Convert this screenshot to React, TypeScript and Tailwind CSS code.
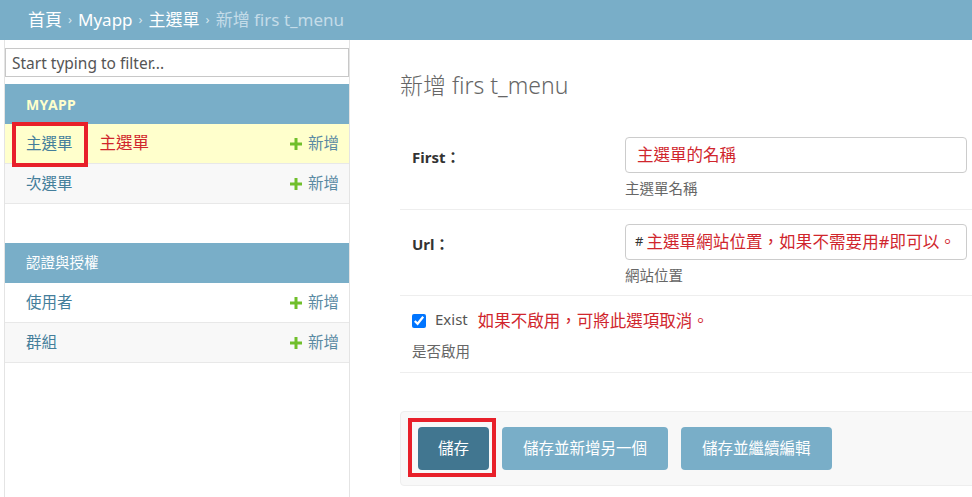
import React from "react";

const Plus = () => (
  <svg width="12" height="12" viewBox="0 0 12 12" className="mr-[6px]">
    <rect x="4.5" y="0" width="3" height="12" fill="#70bf2b" />
    <rect x="0" y="4.5" width="12" height="3" fill="#70bf2b" />
  </svg>
);

const SideRow = ({ name, bg, extra }: { name: string; bg: string; extra?: string }) => (
  <div className={`h-10 flex items-center pl-[21px] pr-[10px] border-b border-[#e8e8e8] ${bg}`}>
    <span className="text-[15.5px] text-[#447e9b]">{name}</span>
    {extra && <span className="ml-[27px] text-[16.5px] text-[#d0262d]">{extra}</span>}
    <span className="ml-auto flex items-center text-[15.5px] text-[#5a8aa3]">
      <Plus />
      新增
    </span>
  </div>
);

export default function App() {
  return (
    <div className="w-[972px] h-[497px] overflow-hidden bg-white font-['Noto_Sans','Noto_Sans_CJK_TC',sans-serif]">
      {/* breadcrumbs */}
      <header className="h-10 bg-[#79aec8] flex items-center pl-[28px] text-[17px] text-white">
        <span>首頁</span>
        <span className="mx-[6px] text-[13px] text-[#d6e7ef]">›</span>
        <span>Myapp</span>
        <span className="mx-[6px] text-[13px] text-[#d6e7ef]">›</span>
        <span>主選單</span>
        <span className="mx-[6px] text-[13px] text-[#d6e7ef]">›</span>
        <span className="text-[#c4dce8]">新增 firs t_menu</span>
      </header>

      <div className="flex h-[457px]">
        {/* sidebar */}
        <nav className="relative ml-[4px] w-[346px] flex-none border-x border-[#e4e4e4]">
          <div className="pt-[8px]">
            <input
              placeholder="Start typing to filter..."
              className="block h-[29px] w-full border border-[#c8c8c8] px-[6px] text-[15.5px] text-[#333] placeholder:text-[#555] outline-none"
            />
          </div>
          <div className="mt-[7px]">
            <div className="h-10 bg-[#79aec8] flex items-center pl-[21px] text-[14px] font-bold tracking-[0.4px] text-[#ffffcc]">
              MYAPP
            </div>
            <SideRow name="主選單" bg="bg-[#ffffcc]" extra="主選單" />
            <SideRow name="次選單" bg="bg-[#f8f8f8]" />
          </div>
          <div className="mt-[39px]">
            <div className="h-10 bg-[#79aec8] flex items-center pl-[21px] text-[14.5px] text-white">
              認證與授權
            </div>
            <SideRow name="使用者" bg="bg-white" />
            <SideRow name="群組" bg="bg-[#f8f8f8]" />
          </div>
          <div className="absolute left-[7px] top-[82px] w-[76px] h-[45px] border-[4px] border-[#e8202a]" />
        </nav>

        {/* content */}
        <main className="flex-1 pl-[50px]">
          <h1 className="mt-[30px] text-[23px] leading-[30px] font-light text-[#666]">新增 firs t_menu</h1>

          <div className="mt-[23px] w-[600px]">
            <div className="flex px-[12px] pt-[14px] pb-[11px] border-b border-[#eee]">
              <label className="w-[213px] pt-[9px] text-[15px] font-bold text-[#333]">First：</label>
              <div>
                <div className="h-[36px] w-[342px] rounded-[4px] border border-[#ccc] flex items-center pl-[11px] text-[16.5px] text-[#d0262d]">
                  主選單的名稱
                </div>
                <div className="mt-[5px] leading-[20px] text-[14.5px] text-[#666]">主選單名稱</div>
              </div>
            </div>

            <div className="flex px-[12px] pt-[14px] pb-[10px] border-b border-[#eee]">
              <label className="w-[213px] pt-[9px] text-[15px] font-bold text-[#333]">Url：</label>
              <div>
                <div className="h-[36px] w-[342px] rounded-[4px] border border-[#ccc] flex items-center pl-[9px] whitespace-nowrap overflow-hidden">
                  <span className="text-[13px] text-[#333] mr-[3px]">#</span>
                  <span className="text-[16.5px] tracking-[0.1px] text-[#d0262d]">主選單網站位置，如果不需要用#即可以。</span>
                </div>
                <div className="mt-[5px] leading-[20px] text-[14.5px] text-[#666]">網站位置</div>
              </div>
            </div>

            <div className="px-[12px] pt-[13px] pb-[11px] border-b border-[#eee]">
              <div className="flex items-center h-[24px]">
                <input type="checkbox" checked readOnly className="m-0 w-[14px] h-[14px] accent-[#0075ff]" />
                <span className="ml-[9px] -mt-[4px] text-[15px] text-[#555]">Exist</span>
                <span className="ml-[10px] text-[16.5px] text-[#d0262d]">如果不啟用，可將此選項取消。</span>
              </div>
              <div className="mt-[8px] leading-[20px] text-[14.5px] text-[#666]">是否啟用</div>
            </div>
          </div>

          <div className="relative mt-[38px] w-[600px] rounded-[4px] border border-[#eee] bg-[#f8f8f8] pl-[17px] py-[15px] flex gap-[13px]">
            <button className="h-[43px] rounded-[4px] px-[20px] bg-[#417690] text-[15.5px] text-white">儲存</button>
            <button className="h-[43px] rounded-[4px] px-[21px] bg-[#79aec8] text-[15.5px] text-white">儲存並新增另一個</button>
            <button className="h-[43px] rounded-[4px] px-[21px] bg-[#79aec8] text-[15.5px] text-white">儲存並繼續編輯</button>
            <div className="absolute left-[7px] top-[6px] w-[88px] h-[59px] border-[4px] border-[#e8202a]" />
          </div>
        </main>
      </div>
    </div>
  );
}
